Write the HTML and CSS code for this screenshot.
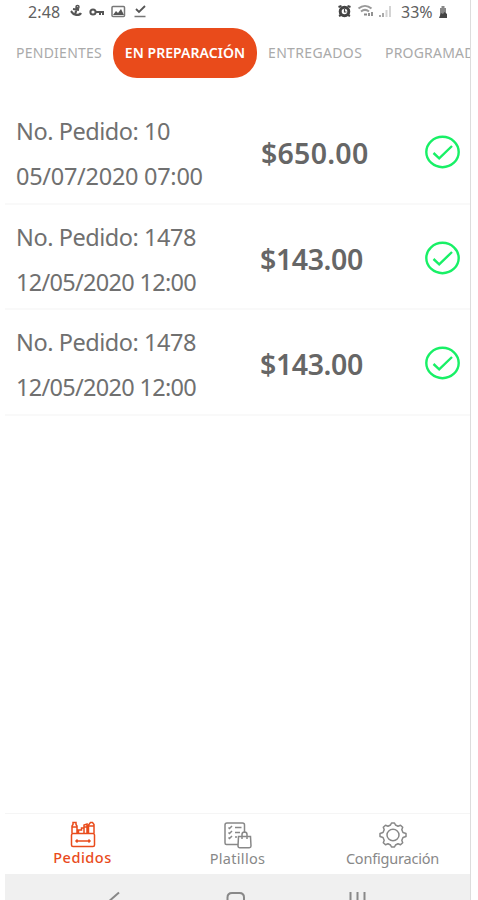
FILE: index.html
```html
<!DOCTYPE html>
<html lang="es">
<head>
<meta charset="utf-8">
<title>Pedidos</title>
<link rel="stylesheet" href="styles.css">
</head>
<body>
<div class="phone">
  <header class="status">
    <span class="clock">2:48</span>
    <svg class="status-left" width="80" height="18" viewBox="0 0 80 18" fill="none" stroke="#555" stroke-width="1.5">
      <path d="M9 6l-2 8M3 10c1 1 2 4 5 4s4 0 5-2M5 8l6 1" stroke-width="2.200"/><circle cx="9.500" cy="6" r="1.500"/>
      <circle cx="25" cy="11" r="2.600" stroke-width="2"/><path d="M28 11h8M32 11v3M35 11v3" stroke-width="2"/>
      <rect x="44" y="5.500" width="12.500" height="10" rx="1" stroke="#777"/><path d="M45 14l3-4 2 2 3-4 3 6z" fill="#555" stroke="none"/>
      <path d="M68 8l3 3 6-6" stroke-width="1.800"/><path d="M66.500 15.500h11" stroke="#777"/>
    </svg>
    <svg class="status-right" width="58" height="18" viewBox="0 0 58 18" fill="none">
      <path d="M2.500 6l3-1M11.500 5l3 1M3 15l2-1M14 15l-2-1" stroke="#444" stroke-width="2"/><circle cx="8.500" cy="10.500" r="4.300" fill="#fff" stroke="#444" stroke-width="3"/><path d="M8.500 8v3h2" stroke="#444" stroke-width="1.200"/>
      <path d="M22.500 7.500c4-3.500 9-3.500 13 0M25 10.500c2.500-2 5.500-2 8 0" stroke="#999" stroke-width="2"/><path d="M28 13.500h3" stroke="#888" stroke-width="2"/><path d="M33 12v3M36 11v4" stroke="#777" stroke-width="1.600"/>
      <path d="M44 16v-2M47 16v-4" stroke="#aaa" stroke-width="2"/><path d="M50.500 16V9M54 16V5" stroke="#d4d4d4" stroke-width="2"/>
    </svg>
    <span class="percent">33%</span>
    <svg class="battery" width="10" height="14" viewBox="0 0 10 14"><path d="M3.500 1h3v2h1.500v9H2V3h1.500z" fill="#888"/><path d="M1 13h8V9L6.500 7 5 9 3 8z" fill="#444"/></svg>
  </header>
  <nav class="tabs">
    <span class="tab pending">PENDIENTES</span>
    <span class="tab active">EN PREPARACIÓN</span>
    <span class="tab delivered">ENTREGADOS</span>
    <span class="tab scheduled">PROGRAMADOS</span>
  </nav>
  <main class="orders">
    <article class="order">
      <div class="info"><p class="number">No. Pedido: 10</p><p>05/07/2020 07:00</p></div>
      <strong class="price">$650.00</strong>
      <svg class="check" width="36" height="34" viewBox="0 0 36 34"><ellipse cx="17.500" cy="17" rx="16.200" ry="15.200"/><path d="M8.500 18l5.700 5.300L27 11"/></svg>
    </article>
    <article class="order">
      <div class="info"><p class="number">No. Pedido: 1478</p><p class="narrow">12/05/2020 12:00</p></div>
      <strong class="price small">$143.00</strong>
      <svg class="check" width="36" height="34" viewBox="0 0 36 34"><ellipse cx="17.500" cy="17" rx="16.200" ry="15.200"/><path d="M8.500 18l5.700 5.300L27 11"/></svg>
    </article>
    <article class="order">
      <div class="info"><p class="number">No. Pedido: 1478</p><p class="narrow">12/05/2020 12:00</p></div>
      <strong class="price small">$143.00</strong>
      <svg class="check" width="36" height="34" viewBox="0 0 36 34"><ellipse cx="17.500" cy="17" rx="16.200" ry="15.200"/><path d="M8.500 18l5.700 5.300L27 11"/></svg>
    </article>
  </main>
  <nav class="bottom">
    <div class="item selected">
      <svg width="28" height="28" viewBox="0 0 28 28">
        <rect x="2.500" y="12.500" width="23" height="13" rx="1.500"/>
        <path d="M3 12V5l1-1.500V1.500h3v2L8 5v7M3 6h5M9.500 12V9h3V7h2M15 12V4l3-1v9M15 6h3M19.500 12V4l2-2.500h2l1.500 2V12M19.500 5h5.500M7 20h14M8.500 18.500L7 20l1.500 1.500M19.500 18.500L21 20l-1.500 1.500"/>
      </svg>
      <span>Pedidos</span>
    </div>
    <div class="item dishes">
      <svg width="28" height="28" viewBox="0 0 28 28">
        <path d="M14 23.500H2.500a1.500 1.500 0 0 1-1.500-1.500V4a2 2 0 0 1 2-2h15.500a2 2 0 0 1 2 2v8"/>
        <path d="M4.500 6.500l1 1L8 5M4.500 11.500l1 1L8 10M4.500 16.500l1 1L8 15M11 6.500h6.500M11 11.500h5M11 16h2"/>
        <path d="M14.500 15.500h12l.5 9.500a1.700 1.700 0 0 1-1.700 1.700h-9.600A1.700 1.700 0 0 1 14 25zM18 18v-4.500a2.500 2.500 0 0 1 5 0V18"/>
      </svg>
      <span>Platillos</span>
    </div>
    <div class="item settings">
      <svg width="28" height="28" viewBox="0 0 28 28">
        <path d="M11.500 4L12.500 2h3L16.500 4L19 5.200L21.500 4.200L23.700 6.300L22.800 8.800L24 11.500L27 12.500V15.500L24 16.500L22.800 19.200L23.700 21.700L21.500 23.800L19 22.800L16.500 24L15.500 26h-3L11.500 24L9 22.800L6.500 23.800L4.300 21.700L5.200 19.200L4 16.500L1 15.500V12.500L4 11.500L5.200 8.800L4.300 6.300L6.500 4.200L9 5.200Z" stroke-linejoin="round"/>
        <ellipse cx="14" cy="14" rx="6" ry="5.700"/>
      </svg>
      <span>Configuración</span>
    </div>
  </nav>
  <footer class="system">
    <svg width="465" height="26" viewBox="0 0 465 26" fill="none" stroke="#888" stroke-width="2">
      <path d="M114 18.500L102 29"/><path d="M222.500 28v-4.500q0-4.500 4.500-4.500h7.500q4.500 0 4.500 4.500V28"/><path d="M345.500 18v9M352.500 18v9M359.500 18v9"/>
    </svg>
  </footer>
</div>
</body>
</html>
```
FILE: styles.css
```css
* { box-sizing: border-box; }
body { margin: 0; background: #fff; font-family: "Noto Sans", sans-serif; overflow: hidden; }
.phone { width: 466px; height: 900px; margin-left: 5px; border-right: 1px solid #ddd; display: flex; flex-direction: column; overflow: hidden; }
.phone svg { display: block; flex: none; }
.status { height: 26px; padding-left: 23px; display: flex; align-items: flex-start; color: #606060; font-size: 16px; line-height: 24px; white-space: nowrap; flex: none; }
.clock { width: 40px; letter-spacing: .1px; }
.status-left { margin-top: 1px; }
.status-right { margin: 1px 0 0 188px; }
.percent { width: 37px; margin-left: 7px; }
.battery { margin-top: 5px; }
.tabs { height: 73px; padding: 2px 0 0 11px; display: flex; align-items: flex-start; flex: none; color: #aaa; font-size: 14px; line-height: 50px; white-space: nowrap; }
.tab { flex: none; }
.pending { width: 97px; letter-spacing: .25px; }
.active { width: 144px; height: 50px; border-radius: 24px; background: #e94b1b; color: #fff; font-weight: 600; text-align: center; letter-spacing: .05px; }
.delivered { width: 128px; padding-left: 11px; letter-spacing: .35px; }
.scheduled { letter-spacing: .2px; }
.order { height: 105.6px; border-bottom: 2px solid #f9f9f9; padding-left: 11px; display: flex; flex: none; color: #707070; }
.orders { flex: 1; }
.info { width: 245px; padding-top: 11px; }
.info p { margin: 0; height: 45px; line-height: 43px; font-size: 23.5px; white-space: nowrap; letter-spacing: -.28px; }
.info .number { letter-spacing: -.46px; }
.info .narrow { letter-spacing: -.7px; }
.price { width: 164px; font-size: 28.5px; line-height: 108px; font-weight: 600; letter-spacing: .25px; color: #666; }
.price.small { margin-left: -1px; width: 165px; letter-spacing: -.4px; line-height: 109px; }
.check { margin-top: 36px; fill: none; stroke: #18f066; stroke-width: 2.4; }
.bottom { height: 61px; border-top: 1px solid #f5f5f5; display: flex; flex: none; color: #888; font-size: 14.5px; line-height: 20px; }
.item { width: 155px; padding-top: 7px; display: flex; flex-direction: column; align-items: center; }
.item svg { fill: none; stroke: currentColor; stroke-width: 1.5; }
.item span { margin-top: -1px; }
.selected { color: #e94b1b; }
.selected span { font-weight: 500; letter-spacing: .5px; margin-top: -2px; }
.dishes span { letter-spacing: .3px; }
.settings span { letter-spacing: -.2px; }
.system { height: 26px; background: #f0f0f0; flex: none; overflow: hidden; }
```
